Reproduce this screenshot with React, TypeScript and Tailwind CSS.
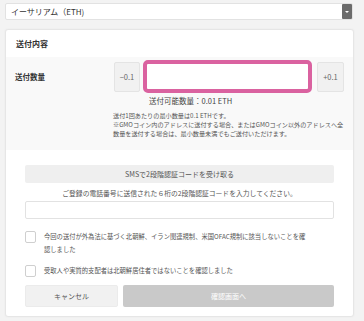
import React from 'react';

const jp = { fontFamily: '"Noto Sans CJK JP", "Noto Sans", sans-serif' };

const Check = ({ children }: { children: React.ReactNode }) => (
  <label className="flex items-start gap-[8px]">
    <span className="mt-[1px] h-[12px] w-[11px] shrink-0 rounded-[2px] border border-[#cfcfcf] bg-white" />
    <span className="whitespace-nowrap text-[6.3px] leading-[13px] text-[#555]">{children}</span>
  </label>
);

const App = () => {
  return (
    <div className="h-[321px] w-[364px] overflow-hidden bg-[#f3f3f3] px-[5px] pt-[3px]" style={jp}>
      {/* currency select */}
      <div className="flex h-[17px] w-[348px] items-center justify-between rounded-[2px] border border-[#e2e2e2] bg-white pl-[5px]">
        <span className="text-[8px] text-[#333]">イーサリアム（ETH)</span>
        <span className="flex h-[15px] w-[10px] items-center justify-center rounded-[1px] bg-[#6b6b6b]">
          <span className="h-0 w-0 border-x-[2px] border-t-[2px] border-x-transparent border-t-white" />
        </span>
      </div>

      <div className="mt-[9px] w-[349px] overflow-hidden rounded-[3px] border border-[#e6e6e6] bg-white shadow-[0_0_2px_rgba(0,0,0,0.05)]">
        <div className="flex h-[27px] items-center pl-[10px]">
          <span className="text-[8px] font-bold text-[#333]">送付内容</span>
        </div>

        {/* amount row */}
        <div className="flex bg-[#f9f9f9] pt-[3px] pb-[12px]">
          <div className="flex h-[33px] w-[107px] shrink-0 items-center pl-[9px]">
            <span className="text-[7.5px] font-bold text-[#333]">送付数量</span>
          </div>
          <div className="flex flex-col">
            <div className="flex h-[33px] items-center">
              <div className="ml-[1px] flex h-[30px] w-[26px] items-center justify-center rounded-[2px] border border-[#e4e4e4] bg-[#f1f1f1] text-[7.5px] text-[#666]">−0.1</div>
              <div className="ml-[3px] h-[33px] w-[169px] rounded-[5px] border-[4px] border-[#da62a0] bg-white" />
              <div className="ml-[5px] flex h-[30px] w-[27px] items-center justify-center rounded-[2px] border border-[#e4e4e4] bg-[#f1f1f1] text-[7.5px] text-[#666]">+0.1</div>
            </div>
            <div className="mt-[3px] pl-[36px] text-[7.5px] leading-[10px] text-[#444]">送付可能数量：0.01 ETH</div>
            <div className="mt-[5px] whitespace-nowrap text-[6.15px] leading-[9px] text-[#555]">
              送付1回あたりの最小数量は0.1 ETHです。<br />
              ※GMOコイン内のアドレスに送付する場合、またはGMOコイン以外のアドレスへ全<br />
              数量を送付する場合は、最小数量未満でもご送付いただけます。
            </div>
          </div>
        </div>

        {/* verification */}
        <div className="flex flex-col px-[19px] pt-[15px] pb-[9px]">
          <button className="h-[18px] w-full rounded-[2px] bg-[#efefef] text-[7px] text-[#555]">SMSで2段階認証コードを受け取る</button>
          <p className="mt-[5px] text-center text-[6.8px] leading-[10px] text-[#555]">ご登録の電話番号に送信された６桁の2段階認証コードを入力してください。</p>
          <div className="mt-[3px] h-[18px] w-full rounded-[2px] border border-[#e2e2e2] bg-white" />

          <div className="mt-[11px] flex flex-col gap-[8px]">
            <Check>
              今回の送付が外為法に基づく北朝鮮、イラン関連規制、米国OFAC規制に該当しないことを確<br />
              認しました
            </Check>
            <Check>受取人や実質的支配者は北朝鮮居住者ではないことを確認しました</Check>
          </div>

          <div className="mt-[8px] flex gap-[5px]">
            <button className="h-[22px] w-[93px] rounded-[2px] border border-[#ebebeb] bg-[#f1f1f1] text-[7px] text-[#555]">キャンセル</button>
            <button className="h-[22px] flex-1 rounded-[2px] bg-[#c9c9c9] text-[7px] text-white">確認画面へ</button>
          </div>
        </div>
      </div>
    </div>
  );
};

export default App;
